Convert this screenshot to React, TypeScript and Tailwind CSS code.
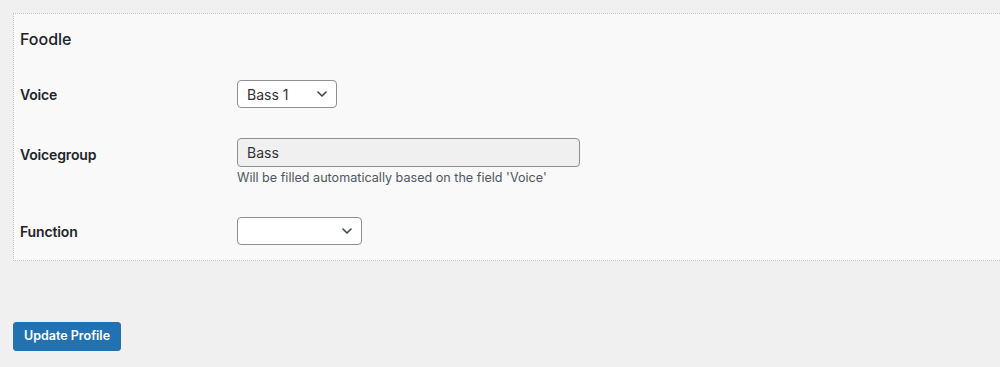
import React from 'react';

const Chevron = () => (
    <svg width="10" height="6" viewBox="0 0 10 6" fill="none" className="shrink-0">
        <path d="M1 1l4 4 4-4" stroke="#3c434a" strokeWidth="1.6" strokeLinecap="round" strokeLinejoin="round" />
    </svg>
);

const SelectBox = ({ value, width }: { value: string; width: string }) => (
    <div className={`${width} h-[28px] bg-white border border-[#8c8f94] rounded-[4px] flex items-center justify-between pl-[9px] pr-[9px]`}>
        <span className="text-[14px] text-[#2c3338]">{value}</span>
        <Chevron />
    </div>
);

export default function App() {
    return (
        <div className="w-[1000px] h-[367px] overflow-hidden bg-[#f0f0f1] pt-[13px] pl-[13px] font-['Inter','Liberation_Sans',sans-serif] text-[#1d2327]">
            {/* Profile section */}
            <div className="h-[248px] bg-[#f9f9f9] border border-r-0 border-dotted border-[#c3c4c7] pl-[6px] pt-[15px]">
                <h2 className="text-[16px] leading-[20px] font-medium">Foodle</h2>

                <div className="flex items-center mt-[31px]">
                    <label className="w-[217px] text-[14px] font-semibold tracking-[-0.15px]">Voice</label>
                    <SelectBox value="Bass 1" width="w-[100px]" />
                </div>

                <div className="flex items-start mt-[30px]">
                    <label className="w-[217px] text-[14px] font-semibold tracking-[-0.15px] pt-[6px]">Voicegroup</label>
                    <div>
                        <div className="w-[343px] h-[29px] bg-[#f0f0f1] border border-[#8c8f94] rounded-[4px] flex items-center pl-[9px] text-[14px] text-[#2c3338]">
                            Bass
                        </div>
                        <p className="text-[12.6px] leading-[18px] text-[#50575e] mt-[2px]">Will be filled automatically based on the field 'Voice'</p>
                    </div>
                </div>

                <div className="flex items-center mt-[30px]">
                    <label className="w-[217px] text-[14px] font-semibold tracking-[-0.15px]">Function</label>
                    <SelectBox value="" width="w-[125px]" />
                </div>
            </div>

            <button className="mt-[61px] h-[29px] px-[10px] bg-[#2271b1] text-white text-[12.5px] font-semibold rounded-[3px] border border-[#2271b1]">
                Update Profile
            </button>
        </div>
    );
}
